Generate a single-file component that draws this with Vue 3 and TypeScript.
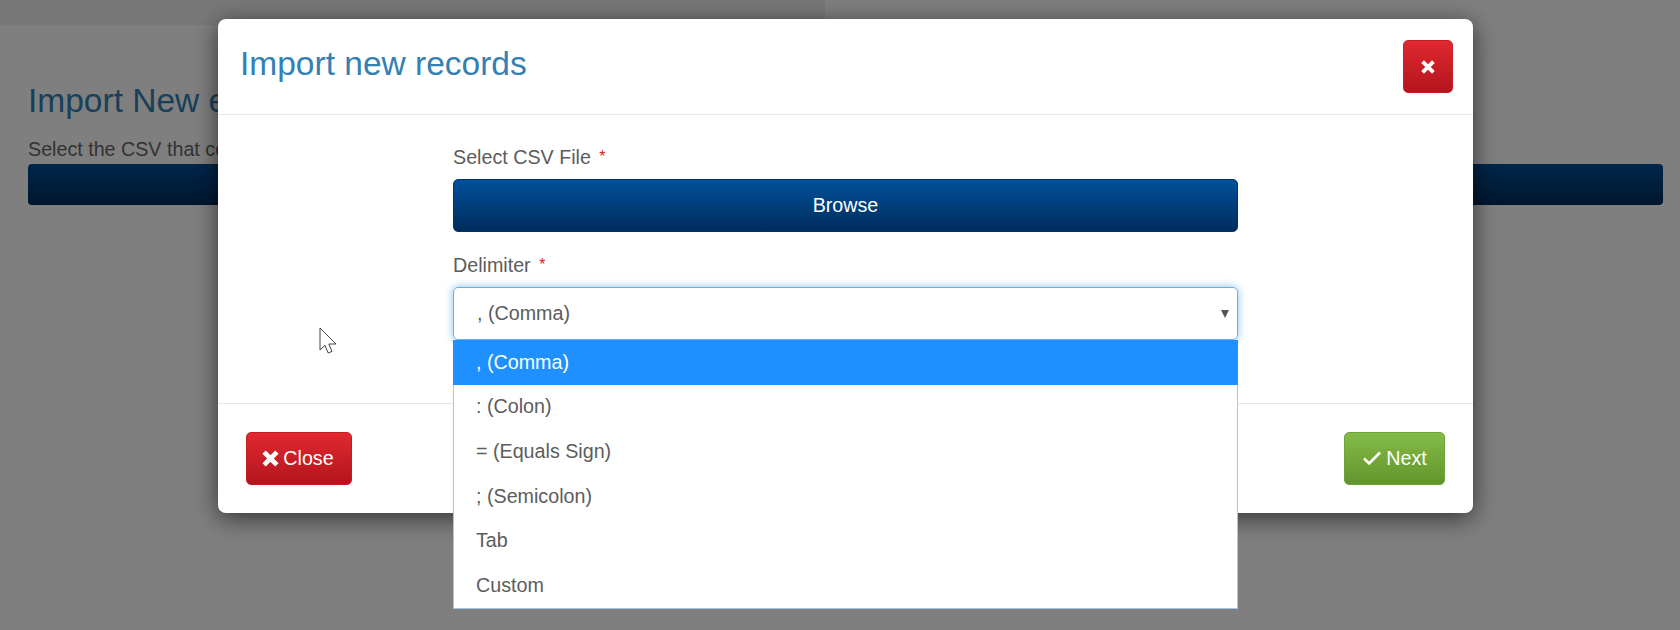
<template>
  <div class="page">
    <div class="top-band"></div>
    <div class="content">
      <h2 class="page-title">Import New entries</h2>
      <p class="page-hint">Select the CSV that contains the new entries</p>
      <div class="page-browse"></div>
    </div>

    <div class="backdrop">
      <div class="modal">
        <div class="modal-header">
          <h3 class="modal-title">Import new records</h3>
          <button class="btn btn-red btn-square" aria-label="Close">
            <svg class="icon-x" viewBox="0 0 16 16"><path d="M3.2 3.2 12.8 12.8M12.8 3.2 3.2 12.8" /></svg>
          </button>
        </div>
        <div class="modal-body">
          <div class="form">
            <label class="field-label">Select CSV File <span class="req">*</span></label>
            <button class="btn btn-blue">Browse</button>
            <label class="field-label second">Delimiter <span class="req">*</span></label>
            <div class="select">
              <div class="select-box">
                <span>{{ selected }}</span>
                <span class="caret"></span>
              </div>
              <ul class="options">
                <li v-for="opt in options" :key="opt" :class="{ active: opt === selected }">{{ opt }}</li>
              </ul>
            </div>
          </div>
        </div>
        <div class="modal-footer">
          <button class="btn btn-red btn-wide">
            <svg class="icon-x small" viewBox="0 0 16 16"><path d="M2.6 2.6 13.4 13.4M13.4 2.6 2.6 13.4" /></svg>
            Close
          </button>
          <button class="btn btn-green btn-wide">
            <svg class="icon-check" viewBox="0 0 20 16"><path d="M2 8.5 7.2 13.5 18 2.5" /></svg>
            Next
          </button>
        </div>
      </div>
    </div>

    <svg class="cursor" width="20" height="28" viewBox="0 0 20 28">
      <path d="M1 1V23L6 18.4 9.2 26 13 24.4 9.8 17H17Z" fill="#fff" stroke="#444" stroke-width="1" />
    </svg>
  </div>
</template>

<script setup lang="ts">
import { ref } from 'vue'

const options = [', (Comma)', ': (Colon)', '= (Equals Sign)', '; (Semicolon)', 'Tab', 'Custom']
const selected = ref(options[0])
</script>

<style>
html,
body {
  margin: 0;
  background: #fff;
}
</style>

<style scoped>
.page {
  position: relative;
  width: 1680px;
  height: 630px;
  overflow: hidden;
  background: #fff;
  font-family: "Liberation Sans", Arial, sans-serif;
  color: #5c5c5c;
}

.top-band {
  width: 825px;
  height: 25px;
  background: #f0f0f0;
}

.content {
  padding: 57px 17px 0 28px;
}

.page-title {
  margin: 0;
  font-size: 33.5px;
  line-height: 38px;
  font-weight: 400;
  color: #3380b4;
}

.page-hint {
  margin: 19px 0 0;
  font-size: 19.7px;
  line-height: 20px;
  color: #666;
}

.page-browse {
  height: 41px;
  margin-top: 5px;
  border-radius: 4px;
  background: linear-gradient(#004e96, #002d5c);
}

.backdrop {
  position: absolute;
  inset: 0;
  background: rgba(0, 0, 0, 0.5);
}

.modal {
  position: absolute;
  left: 218px;
  top: 19px;
  width: 1255px;
  height: 494px;
  display: flex;
  flex-direction: column;
  background: #fff;
  border-radius: 8px;
  box-shadow: 0 5px 25px rgba(0, 0, 0, 0.6);
}

.modal-header {
  display: flex;
  justify-content: space-between;
  align-items: center;
  height: 95px;
  padding: 0 20.5px 0 22px;
  border-bottom: 1px solid #e5e5e5;
}

.modal-title {
  margin: 0 0 5px;
  font-size: 33.5px;
  font-weight: 400;
  color: #3380b4;
}

.modal-body {
  flex: 1;
  padding: 0 235px;
}

.form {
  display: flex;
  flex-direction: column;
  width: 785px;
  padding-top: 32px;
}

.field-label {
  font-size: 19.7px;
  line-height: 20px;
  color: #5c5c5c;
}

.field-label.second {
  margin-top: 23px;
}

.req {
  margin-left: 3px;
  color: #e02020;
  font-size: 16px;
  vertical-align: 2px;
}

.btn {
  display: inline-flex;
  align-items: center;
  justify-content: center;
  box-sizing: border-box;
  height: 53px;
  padding: 0;
  border-radius: 5px;
  border: 1px solid transparent;
  color: #fff;
  font-family: inherit;
  font-size: 19.7px;
}

.btn-blue {
  margin-top: 12px;
  padding-bottom: 1px;
  border-color: #00356b;
  background: linear-gradient(#00509a, #002d5c);
}

.btn-red {
  border-color: #c41e25;
  background: linear-gradient(#e12830, #b3151c);
}

.btn-green {
  border-color: #6da33b;
  background: linear-gradient(#85bc48, #62942c);
}

.btn-square {
  width: 50px;
}

.btn-wide {
  gap: 3px;
  padding-bottom: 1px;
}

.modal-footer .btn-red {
  width: 106px;
  padding-right: 3px;
}

.modal-footer .btn-green {
  width: 101px;
}

.icon-x {
  width: 18px;
  height: 18px;
  fill: none;
  stroke: #fff;
  stroke-width: 3.4;
}

.icon-x.small {
  width: 19px;
  height: 19px;
  stroke-width: 4;
}

.icon-check {
  width: 20px;
  height: 16px;
  margin-right: 1px;
  fill: none;
  stroke: #fff;
  stroke-width: 2.6;
}

.select {
  position: relative;
  margin-top: 12px;
}

.select-box {
  display: flex;
  align-items: center;
  justify-content: space-between;
  box-sizing: border-box;
  height: 53px;
  padding: 0 8px 0 23px;
  border: 1px solid #66afe9;
  border-radius: 5px;
  box-shadow: 0 0 9px rgba(102, 175, 233, 0.8);
  font-size: 19.7px;
  color: #5c5c5c;
}

.caret {
  width: 0;
  height: 0;
  margin-top: 1px;
  border-left: 4px solid transparent;
  border-right: 4px solid transparent;
  border-top: 8px solid #555;
}

.options {
  position: absolute;
  left: 0;
  right: 0;
  top: 100%;
  margin: 0;
  padding: 0;
  list-style: none;
  background: #fff;
  border: 1px solid #a6c6e6;
  border-top: 0;
  box-sizing: border-box;
}

.options li {
  display: flex;
  align-items: center;
  height: 44.6px;
  padding-left: 22px;
  font-size: 19.7px;
  color: #5c5c5c;
}

.options li.active {
  margin: 0 -1px;
  padding-left: 23px;
  background: #1e90ff;
  color: #fff;
}

.modal-footer {
  display: flex;
  justify-content: space-between;
  align-items: flex-start;
  height: 110px;
  padding: 28px 28px 0;
  box-sizing: border-box;
  border-top: 1px solid #e5e5e5;
}

.cursor {
  position: absolute;
  left: 319px;
  top: 327px;
}
</style>
